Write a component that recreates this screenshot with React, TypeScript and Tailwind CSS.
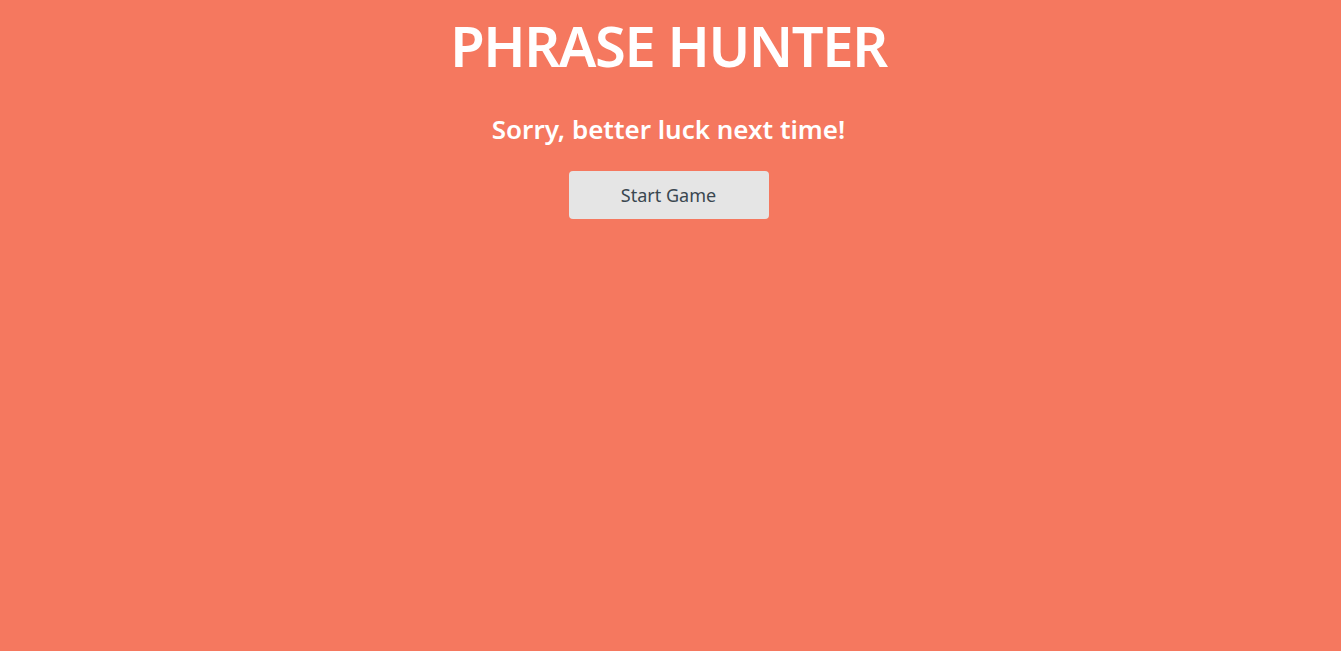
export default function App() {
  return (
    <div className="min-h-screen bg-[#f5785f] font-['Noto_Sans',sans-serif] text-white">
      <div className="flex flex-col items-center pr-[4px]">
        <h1 className="mt-[7px] text-[56px] font-semibold leading-[76px] tracking-tight">PHRASE HUNTER</h1>
        <h2 className="mt-[28px] text-[26px] font-semibold leading-[36px]">Sorry, better luck next time!</h2>
        <button className="mt-[24px] h-[48px] w-[200px] rounded-[4px] bg-[#e5e5e5] text-[18px] text-[#3a4750]">
          Start Game
        </button>
      </div>
    </div>
  );
}
